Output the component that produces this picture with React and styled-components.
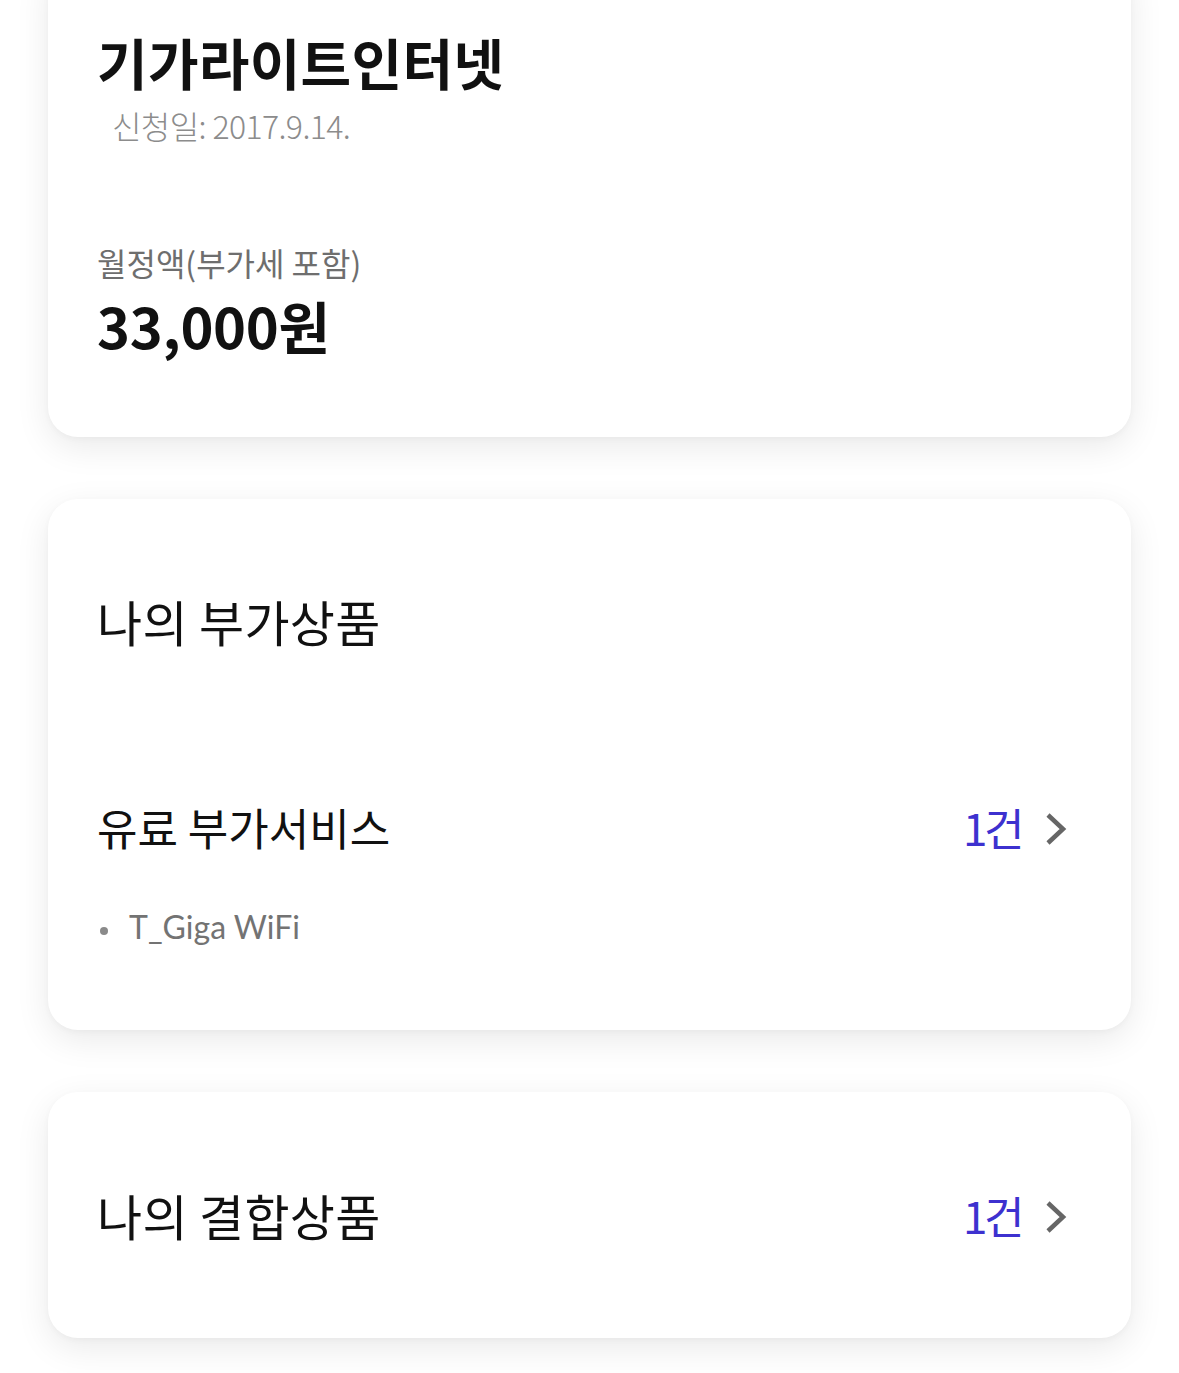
import React from 'react'
import styled, { createGlobalStyle } from 'styled-components'

const GlobalStyle = createGlobalStyle`
    html, body {
        margin: 0;
        padding: 0;
        background: #ffffff;
        font-family: "Noto Sans CJK KR", "Noto Sans", sans-serif;
        color: #111111;
        overflow: hidden;
    }
`

const Page = styled.div`
    display: flex;
    flex-direction: column;
    gap: 62px;
    padding: 0 48px 40px;
`

const Card = styled.section`
    background: #ffffff;
    border-radius: 30px;
    box-shadow: 0 10px 34px rgba(0, 0, 0, 0.085), 0 2px 6px rgba(0, 0, 0, 0.03);
    padding: ${props => props.$padding || '0 64px 0 49px'};
    margin-top: ${props => props.$offset || '0'};
    display: flex;
    flex-direction: column;
`

const Title = styled.h1`
    margin: 0;
    font-size: 55px;
    line-height: 64px;
    font-weight: 700;
    letter-spacing: 0.3px;
    color: #111;
`

const DateText = styled.div`
    margin-top: 12px;
    padding-left: 15px;
    font-size: 32px;
    line-height: 40px;
    font-weight: 300;
    color: #8c8c8c;
    letter-spacing: -0.6px;
`

const Label = styled.div`
    margin-top: 97px;
    font-size: 32px;
    line-height: 40px;
    color: #6e6e6e;
    letter-spacing: 0;
`

const Amount = styled.div`
    margin-top: 11px;
    font-size: 56px;
    line-height: 64px;
    font-weight: 700;
    letter-spacing: -0.3px;
    color: #111;
`

const Heading = styled.h2`
    margin: 0;
    font-size: 49px;
    line-height: 56px;
    font-weight: 400;
    letter-spacing: 0.3px;
    color: #111;
`

const Row = styled.div`
    display: flex;
    align-items: center;
    justify-content: space-between;
    margin-top: ${props => props.$top || '0'};
`

const RowTitle = styled.div`
    font-size: 44px;
    line-height: 56px;
    font-weight: 400;
    letter-spacing: 0;
    color: #111;
`

const Count = styled.a`
    display: flex;
    align-items: center;
    gap: 24px;
    color: #3d31cf;
    font-size: 44px;
    line-height: 56px;
    letter-spacing: -3.5px;
    text-decoration: none;
    cursor: pointer;
`

const Chevron = styled.svg`
    width: 22px;
    height: 34px;
    display: block;
    margin-top: 4px;
`

const ItemList = styled.ul`
    list-style: none;
    margin: 50px 0 0;
    padding: 0;
`

const Item = styled.li`
    display: flex;
    align-items: center;
    gap: 21px;
    font-family: Lato, "Noto Sans CJK KR", sans-serif;
    font-size: 32px;
    line-height: 44px;
    color: #737373;

    &::before {
        content: '';
        width: 8px;
        height: 8px;
        border-radius: 50%;
        background: #8a8a8a;
        margin-left: 3px;
        margin-top: 8px;
    }
`

function Arrow() {
    return (
        <Chevron viewBox="0 0 22 34" fill="none">
            <path d="M3 3 L18 17 L3 31" stroke="#666666" strokeWidth="4.5" strokeLinecap="butt" strokeLinejoin="miter" />
        </Chevron>
    )
}

export default function App() {
  return (
    <>
        <GlobalStyle />
        <Page>
            <Card $offset="-40px" $padding="69px 64px 80px 49px">
                <Title>기가라이트인터넷</Title>
                <DateText>신청일: 2017.9.14.</DateText>
                <Label>월정액(부가세 포함)</Label>
                <Amount>33,000원</Amount>
            </Card>

            <Card $padding="94px 64px 81px 49px">
                <Heading>나의 부가상품</Heading>
                <Row $top="150px">
                    <RowTitle>유료 부가서비스</RowTitle>
                    <Count>1건 <Arrow /></Count>
                </Row>
                <ItemList>
                    <Item>T_Giga WiFi</Item>
                </ItemList>
            </Card>

            <Card $padding="95px 64px 95px 49px">
                <Row>
                    <Heading>나의 결합상품</Heading>
                    <Count>1건 <Arrow /></Count>
                </Row>
            </Card>
        </Page>
    </>
  )
}
